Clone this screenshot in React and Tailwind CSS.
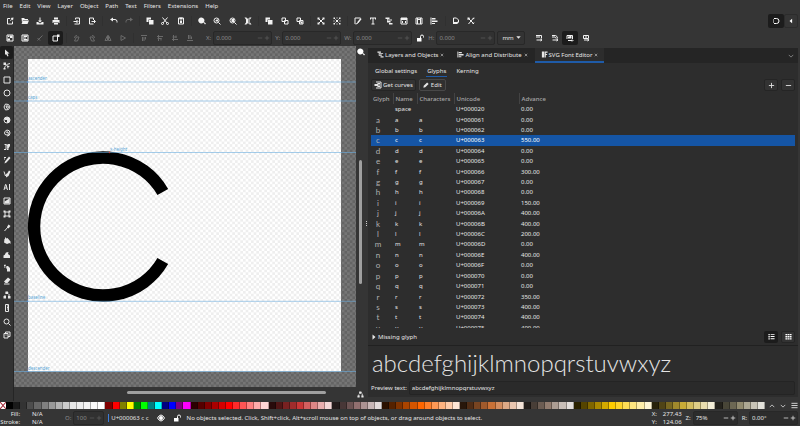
import { useState } from 'react';
import clsx from 'clsx';

// 16x16 icons: s = stroked path, f = filled path
const ICONS = {
  new: { s: 'M8 3H3v11h10V9', f: 'M9 2l6-1-1 6-2-2-3 3-1-1 3-3z' },
  open: { f: 'M1 2h5l2 2h6v2H4L2 11zM4 7h12l-3 7H1z' },
  save: { f: 'M7 1h2v6h3l-4 4-4-4h3zM1 10h3l4 3 4-3h3v5H1z' },
  print: { f: 'M4 1h8v4H4zM1 6h14v6h-2v-2H3v2H1zM4 11h8v4H4z' },
  import: { s: 'M5 5V2h8v12H3M1 9h8M7 6l3 3-3 3' },
  export: { s: 'M11 6V2H3v12h8M7 9h7M12 6l3 3-3 3' },
  undo: { s: 'M2 5h8q4 0 4 4v2', f: 'M6 1v8L0 5z' },
  redo: { s: 'M14 5H6q-4 0-4 4v2', f: 'M10 1v8l6-4z' },
  copy: { f: 'M1 1h9v4H5v5H1zM6 6h9v9H6z' },
  cut: { s: 'M3 1l9 11M13 1L4 12M1 13a2 2 0 104 0 2 2 0 10-4 0M11 13a2 2 0 104 0 2 2 0 10-4 0' },
  paste: { s: 'M3 2h10v12H3z', f: 'M5 1h6v4H5zM6 7h4v5H6z' },
  zoomSel: { f: 'M7 1a6 6 0 104 10l3 4 2-2-4-3A6 6 0 007 1z' },
  zoomDraw: { s: 'M7 2a5 5 0 100 10A5 5 0 007 2zM11 11l4 4', f: 'M7 5h3v4H5V7z' },
  zoomPage: { s: 'M7 2a5 5 0 100 10A5 5 0 007 2zM11 11l4 4', f: 'M5 4h5v6H5z' },
  zoomWidth: { f: 'M5 3h6v10H5zM1 1h4l2 4v6l-2 4H1l3-4V5zM15 1h-4L9 5v6l2 4h4l-3-4V5z' },
  clone: { s: 'M2 2h7v7H2zM7 7h7v7H7z' },
  unclone: { s: 'M2 2h7v7H2zM7 7h7v7H7z', f: 'M9 9h4v4H9z' },
  dup: { f: 'M1 1h9v4H5v5H1zM6 6h9v9H6z' },
  group: { s: 'M4 4l8 8M12 4l-8 8', f: 'M1 1h4v4H1zM11 1h4v4h-4zM1 11h4v4H1zM11 11h4v4h-4zM6 6h4v4H6z' },
  ungroup: { s: 'M5 5l6 6M11 5l-6 6', f: 'M1 1h3v3H1zM12 1h3v3h-3zM1 12h3v3H1zM12 12h3v3h-3zM7 1h2v2H7zM7 13h2v2H7zM1 7h2v2H1zM13 7h2v2h-2z' },
  fill: { s: 'M2 14V2h11M3 14l4-1 7-9', f: 'M13 2l2 2-7 8-2-1z' },
  text: { f: 'M2 1h12v4h-2V3H9v10h2v2H5v-2h2V3H4v2H2z' },
  layers: { f: 'M1 1h8v3H1zM5 5h9v2H5zM4 8h7v3H4zM8 12h7v3H8zM4 4h1v6H4z' },
  xml: { s: 'M2 2h12v12H2zM2 5h12M6 8l-2 2 2 2M10 8l2 2-2 2', f: 'M2 2h12v3H2z' },
  selectors: { s: 'M2 2h12v12H2zM5 2v12M11 2v12M5 5h6' },
  curves: { s: 'M4 2h10v12H4M8 5h4M8 8h4M8 11h4', f: 'M1 6h5V3l3 5-3 5v-3H1z' },
  align: { f: 'M1 1h2v14H1zM4 2h7v3H4zM4 7h11v3H4zM4 12h6v2H4z' },
  docProps: { s: 'M3 14V2h6l4 4v4', f: 'M4 10h6v4H4zM10 9l4 2-4 3z' },
  prefs: { s: 'M2 2l12 12M13 2L3 14M2 5l3-3M11 14l3-3', f: 'M11 2l3 3 1-4zM1 1h4v4H1z' },
  selAll: { s: 'M2 2h12v12H2z', f: 'M3 9h5v4H3zM8 3h5v5H8zM4 3h3v3H4z' },
  selLayer: { s: 'M2 2h12v12H2z', f: 'M5 3h7v3H5zM4 7h6v2H4zM5 10h8v3H5z' },
  desel: { s: 'M3 13L13 3M3 8l5 5' },
  touch: { s: 'M2 4h9v10H2z', f: 'M10 1h5v5h-5z' },
  rotL: { s: 'M3 14h6l3-8H7zM3 8q0-5 5-5' },
  rotR: { s: 'M13 14H7L4 6h5zM13 8q0-5-5-5' },
  flipH: { s: 'M7 3v10H2zM9 3v10h5z' },
  flipV: { s: 'M4 3v10l9-5z' },
  toTop: { s: 'M2 3h12M5 6v8M11 6v5M8 6v8' },
  up: { s: 'M2 5h12M5 2v12M10 8v5M3 9h8' },
  down: { s: 'M2 11h12M5 2v12M10 3v5M3 6h8' },
  toBottom: { s: 'M2 13h12M5 2v8M11 5v5M8 2v8' },
  lock: { s: 'M9 8V5q0-3 3-3t3 3v2', f: 'M2 8h9v7H2z' },
  scale1: { s: 'M2 3h11v6M2 6h8M3 12h10M11 10l3 2-3 2' },
  scale2: { s: 'M2 3h7q4 1 4 6M2 6h6q2 1 2 3M3 12h10M11 10l3 2-3 2' },
  scale3: { s: 'M2 10V3h11v7M5 7l6-3M4 13h9M12 11l2 2-2 2', f: 'M4 5h7v4H4z' },
  scale4: { s: 'M3 3h10v6H3zM4 12h9M6 6h4M11 10l3 2-3 2' },
  magnet: { s: 'M4 3h5a5 5 0 010 10H4M2 6h2M2 10h2' },
  tri: { f: 'M11 2v12L4 8z' },
  arrow: { f: 'M4 1l9 8H9l2 5-2 1-3-5-2 2z' },
  node: { s: 'M3 14Q3 5 14 3', f: 'M1 1h5v5H1zM7 6l7 3-3 1-1 4zM1 12h4v3H1z' },
  rect: { s: 'M2 2h12v12H2z' },
  ellipse: { s: 'M8 2a6 6 0 100 12A6 6 0 008 2z' },
  star: { s: 'M5 2l6 1 3 5-3 5-6 1-3-6zM6 6h4l1 3-3 2z' },
  box3d: { s: 'M8 2a6 6 0 100 12A6 6 0 008 2z', f: 'M8 2a6 6 0 010 12L8 8H3q0-5 5-6z' },
  spiral: { s: 'M8 8q2-2 3 1t-3 3q-5 0-5-4t5-6q6 0 6 6t-6 6M6 7q2-3 5 0' },
  pen: { s: 'M3 3h3v10H2M6 3l4 3', f: 'M9 2h5v4l-4 6-2-3zM8 11h3v3H8z' },
  pencil: { s: 'M2 3h4M2 6h2', f: 'M12 1l3 3-8 9-4 2 1-4z' },
  calli: { s: 'M2 3l3 9 3-5', f: 'M12 1l3 2-4 9-5 3v-4z' },
  textTool: { s: 'M2 14L5 3h1l3 11M3 10h5M13 2v12' },
  gradient: { s: 'M2 2h12v12H2z', f: 'M3 9l10-6v10H3z' },
  mesh: { s: 'M4 4h8v8H4z', f: 'M1 1h4v4H1zM11 1h4v4h-4zM1 11h4v4H1zM11 11h4v4h-4z' },
  dropper: { s: 'M3 14l7-8', f: 'M11 1l4 3-4 5-3-3z' },
  bucket: { s: 'M5 1v7', f: 'M3 4l6-2 6 7v5l-2-2-5 2-6-3z' },
  tweak: { f: 'M1 9q3-1 5-6l5-1-1 4 4 3v5H1z' },
  spray: { s: 'M2 3h3M2 6h3M4 1v3', f: 'M7 4h3l4 4v7H8V9H6z' },
  eraser: { s: 'M2 14h11', f: 'M10 1l5 4-6 7H5l-3-3z' },
  connector: { s: 'M5 4h6M4 12V8M12 12V6', f: 'M5 1h5v5H5zM1 10h5v5H1zM10 10h5v5h-5z' },
  measure: { s: 'M5 1h6v14H5zM8 4h2M8 7h2M8 10h2' },
  zoom: { s: 'M7 2a5 5 0 100 10A5 5 0 007 2zM11 11l4 4' },
  pages: { s: 'M2 5h8v9H2zM5 5V2h9v9h-4M5 8h2' },
  fontEd: { f: 'M2 1h5v14H2zM8 1h7v3h-4v3h3v2h-3v6H8z' },
  pencilSm: { f: 'M11 1l4 4-9 9-5 1 1-5z' },
  plus: { s: 'M8 2v12M2 8h12' },
  minus: { s: 'M2 8h12' },
  close: { s: 'M3 3l10 10M13 3L3 13' },
  chevD: { s: 'M2 5l6 6 6-6' },
  chevU: { s: 'M2 11l6-6 6 6' },
  list: { f: 'M1 2h3v3H1zM1 7h3v3H1zM1 12h3v3H1zM6 2h9v2H6zM6 7h9v2H6zM6 12h9v2H6z' },
  grid: { f: 'M1 2h4v3H1zM6 2h4v3H6zM11 2h4v3h-4zM1 7h4v3H1zM6 7h4v3H6zM11 7h4v3h-4zM1 12h4v3H1zM6 12h4v3H6zM11 12h4v3h-4z' },
  eye: { s: 'M1 8q7-12 14 0-7 12-14 0z', f: 'M8 4a4 4 0 100 8 4 4 0 000-8z' },
  menu: { s: 'M1 3h14M1 8h14M1 13h14' },
  caret: { f: 'M1 4h14l-7 8z' },
  play: { f: 'M4 1l8 7-8 7z' },
};

function Icon({ name, className = 'size-2' }) {
  const { s, f } = ICONS[name];
  return (
    <svg viewBox="0 0 16 16" className={clsx('shrink-0', className)} aria-hidden="true">
      {s && <path d={s} fill="none" stroke="currentColor" strokeWidth="2" />}
      {f && <path d={f} fill="currentColor" />}
    </svg>
  );
}

const MENUS = ['File', 'Edit', 'View', 'Layer', 'Object', 'Path', 'Text', 'Filters', 'Extensions', 'Help'];

const COMMANDS = [
  ['new', 'open', 'save', 'print'],
  ['import', 'export'],
  ['undo', 'redo'],
  ['copy', 'cut', 'paste'],
  ['zoomSel', 'zoomDraw', 'zoomPage', 'zoomWidth'],
  ['dup', 'clone', 'unclone'],
  ['group', 'ungroup'],
  ['fill', 'text', 'layers', 'xml', 'selectors', 'align'],
  ['docProps', 'prefs'],
];

const SELECT_TOOLS = [
  ['selAll', 'selLayer', 'desel', 'touch'],
  ['rotL', 'rotR', 'flipH', 'flipV'],
  ['toTop', 'up', 'down', 'toBottom'],
];

const TOOLS = [
  'arrow', 'node', 'rect', 'ellipse', 'star', 'box3d', 'spiral', 'pen', 'pencil', 'calli', 'textTool',
  'gradient', 'mesh', 'dropper', 'bucket', 'tweak', 'spray', 'eraser', 'connector', 'measure', 'zoom', 'pages',
];

const ADVANCE = { c: 550, f: 300, i: 150, j: 400, k: 400, l: 200, n: 400, r: 350, s: 400, t: 400, u: 400 };

const GLYPHS = ['space', ...'abcdefghijklmnopqrstu'].map((name) => {
  const char = name === 'space' ? ' ' : name;
  return {
    name,
    char,
    unicode: `U+${char.charCodeAt(0).toString(16).toUpperCase().padStart(6, '0')}`,
    advance: (ADVANCE[name] ?? 0).toFixed(2),
  };
});

const PALETTE = `
000000 1a1a1a 333333 4d4d4d 666666 808080 999999 b3b3b3 cccccc e6e6e6 ececec f2f2f2 f9f9f9 ffffff
800000 ff0000 808000 ffff00 008000 00ff00 008080 00ffff 000080 0000ff 800080 ff00ff
2b0000 550000 800000 aa0000 d40000 ff0000 ff2a2a ff5555 ff8080 ffaaaa ffd5d5
280b0b 501616 782121 a02c2c c83737 d35f5f de8787 e9afaf f4d7d7
241c1c 483737 6c5353 916f6f ac9393 c8b7b7 e3dbdb
2b1100 552200 803300 aa4400 d45500 ff6600 ff7f2a ff9955 ffb380 ffccaa ffe6d5
28170b 502d16 784421 a05a2c c87137 d38d5f deaa87 e9c6af f4e3d7
241f1c 483e37 6c5d53 917c6f ac9d93 c8beb7 e3dedb
2b2200 554400 806600 aa8800 d4aa00 ffcc00 ffd42a ffdd55 ffe680 ffeeaa fff6d5
28220b 504416 786721 a0892c c8ab37 d3bc5f decd87 e9ddaf f4eed7
24221c 484537 6c6753 918a6f aca793 c8c4b7 e3e2db`.trim().split(/\s+/);

const GUIDES = [
  { label: 'ascender', x: 28, y: 82 },
  { label: 'caps', x: 28, y: 101 },
  { label: 'x-height', x: 110, y: 152.5 },
  { label: 'baseline', x: 28, y: 301.3 },
  { label: 'descender', x: 28, y: 371.5 },
];

function IconGroups({ groups, dim = [], active }) {
  return groups.map((group, i) => (
    <div key={i} className="contents">
      {i > 0 && <div className="w-1.5 shrink-0 flex justify-center"><div className="w-px h-2.5 bg-[#303030]" /></div>}
      {group.map((name) => (
        <button
          key={name}
          aria-label={name}
          className={clsx(
            'flex-1 h-3.5 flex items-center justify-center rounded-xs',
            name === active && 'bg-[#1c1c1c]',
            dim.includes(name) ? 'text-[#6a6a6a]' : 'text-[#f2f2f2]'
          )}
        >
          <Icon name={name} />
        </button>
      ))}
    </div>
  ));
}

function Spin({ id, label, value, className, dim }) {
  return (
    <div className="flex items-center gap-0.5">
      <label htmlFor={id} className={dim ? 'text-[#8a8a8a]' : ''}>{label}</label>
      <div className={clsx('flex items-center gap-px h-3.5 pl-0.5 pr-px rounded-xs border border-[#282828]', dim ? 'text-[#8a8a8a] bg-[#313131]' : 'bg-[#2c2c2c]', className)}>
        <input id={id} defaultValue={value} className="flex-1 w-0 min-w-0 bg-transparent outline-none" />
        <button aria-label={`${label} decrease`} className={dim ? 'text-[#5c5c5c]' : ''}><Icon name="minus" className="size-1.5" /></button>
        <button aria-label={`${label} increase`} className={dim ? 'text-[#5c5c5c]' : ''}><Icon name="plus" className="size-1.5" /></button>
      </div>
    </div>
  );
}

function Toolbars() {
  const dim = [...SELECT_TOOLS[1], ...SELECT_TOOLS[2], 'desel', 'redo'];
  return (
    <header className="shrink-0">
      <nav className="h-3 flex items-center gap-[7px] pl-[3px]">
        {MENUS.map((m) => <button key={m}>{m}</button>)}
      </nav>
      <div className="h-[17px] flex items-center justify-between pr-0.5">
        <div className="w-3/5 flex items-center pl-0.5">
          <IconGroups groups={COMMANDS} dim={dim} />
        </div>
        <div className="flex">
          <button aria-label="Snap" className="w-4 h-3.5 flex items-center justify-center rounded-xs bg-[#1c1c1c] text-white"><Icon name="magnet" /></button>
          <button aria-label="Snap options" className="w-3.5 h-3.5 flex items-center justify-center rounded-xs border border-[#2c2c2c] text-white"><Icon name="tri" className="size-1.5" /></button>
        </div>
      </div>
      <div className="h-[17px] flex items-center gap-0.5">
        <div className="w-[198px] flex items-center pl-0.5">
          <IconGroups groups={SELECT_TOOLS} dim={dim} active="touch" />
        </div>
        <div className="flex items-center gap-[3px] pl-1.5">
          <Spin id="x" label="X:" value="0.000" className="w-[59px]" dim />
          <Spin id="y" label="Y:" value="0.000" className="w-[59px]" dim />
          <Spin id="w" label="W:" value="0.000" className="w-[59px]" dim />
        </div>
        <button aria-label="Lock ratio" className="w-3 flex justify-center text-white"><Icon name="lock" /></button>
        <Spin id="h" label="H:" value="0.000" className="w-[59px]" dim />
        <div className="relative flex items-center">
          <select aria-label="Unit" className="appearance-none w-7 h-3.5 pl-1 rounded-xs border border-[#282828] bg-[#333]"><option>mm</option></select>
          <Icon name="caret" className="size-[5px] absolute right-1 pointer-events-none" />
        </div>
        <div className="w-[62px] ml-1 flex items-center">
          <IconGroups groups={[['scale1', 'scale2', 'scale3', 'scale4']]} active="scale3" />
        </div>
      </div>
    </header>
  );
}

function Canvas() {
  return (
    <div className="flex-1 min-w-0 flex flex-col">
      <div className="flex-1 min-h-0 flex">
        <svg viewBox="14 46 342 341" preserveAspectRatio="xMinYMin slice" className="flex-1 min-w-0 h-full" fontFamily="Noto Sans, sans-serif">
          <defs>
            <pattern id="desk" width="5.34" height="5.34" patternUnits="userSpaceOnUse">
              <path d="M0 0h5.34v5.34H0z" fill="#646464" />
              <path d="M0 0h2.67v2.67H0zM2.67 2.67h2.67v2.67H2.67z" fill="#767676" />
            </pattern>
            <pattern id="paper" width="5.34" height="5.34" patternUnits="userSpaceOnUse">
              <path d="M0 0h5.34v5.34H0z" fill="#fff" />
              <path d="M0 0h2.67v2.67H0zM2.67 2.67h2.67v2.67H2.67z" fill="#eee" />
            </pattern>
          </defs>
          <rect x="14" y="46" width="800" height="800" fill="url(#desk)" />
          <rect x="28" y="59" width="313" height="312.5" fill="url(#paper)" />
          <path d="M162.8 192A69 69 0 1 0 162.8 261" fill="none" stroke="#000" strokeWidth="12.4" />
          {GUIDES.map((g) => (
            <g key={g.label}>
              <path d={`M14 ${g.y}H356`} stroke="#6aaee0" strokeWidth="0.7" opacity="0.85" />
              <circle cx={g.x - 0.5} cy={g.y} r="0.8" fill={g.x > 28 ? '#c44' : '#5a8fd0'} />
              <text x={g.x} y={g.y - 2} fontSize="4.4" fill="#5aa7d8">{g.label}</text>
            </g>
          ))}
        </svg>
        <div className="w-[9px] flex flex-col items-center pt-0.5 text-white">
          <Icon name="zoomSel" />
          <div className="w-[3px] h-[124px] mt-[104px] rounded-full bg-[#a0a0a0]" />
        </div>
      </div>
      <div className="h-3.5 flex items-center justify-between">
        <div className="w-[199px] h-[3px] ml-[113px] mb-1 rounded-full bg-[#a0a0a0]" />
        <Icon name="connector" className="size-[7px] mr-px" />
      </div>
    </div>
  );
}

function GlyphTable() {
  const [selected, setSelected] = useState('c');
  return (
    <div className="h-[235px] overflow-hidden">
      <table className="w-full h-[240px] table-fixed border-collapse text-left">
        <colgroup>
          <col className="w-[22px]" />
          <col className="w-6" />
          <col className="w-[37px]" />
          <col className="w-[65px]" />
          <col />
        </colgroup>
        <thead>
          <tr className="text-[#a8a8a8]">
            {['Glyph', 'Name', 'Characters', 'Unicode', 'Advance'].map((h, i) => (
              <th key={h} className={clsx('h-[11px] p-0 pl-0.5 font-medium whitespace-nowrap', i > 0 && 'border-l border-[#434343]')}>{h}</th>
            ))}
          </tr>
        </thead>
        <tbody>
          {GLYPHS.map((g) => (
            <tr key={g.name} onClick={() => setSelected(g.name)} className={clsx(g.name === selected && 'bg-[#1555a5] text-white')}>
              <td className="p-0 pr-2 text-center font-[Lato] text-[8px] leading-[8px] text-[#b0b0b0]">{g.char}</td>
              <td className="p-0 pl-0.5">{g.name}</td>
              <td className="p-0 pl-0.5">{g.char}</td>
              <td className="p-0 pl-0.5">{g.unicode}</td>
              <td className="p-0 pl-0.5">{g.advance}</td>
            </tr>
          ))}
        </tbody>
      </table>
    </div>
  );
}

function DockTab({ icon, label, active }) {
  return (
    <div className={clsx('h-full flex items-center gap-0.5 px-1.5 border-b-2', active ? 'border-[#1f5ba8] bg-[#2d2d2d]' : 'border-transparent')}>
      <button className="flex items-center gap-px whitespace-nowrap"><Icon name={icon} className="size-[7px]" />{label}</button>
      <button aria-label={`Close ${label}`}><Icon name="close" className="size-1" /></button>
    </div>
  );
}

function FontEditor() {
  const [preview, setPreview] = useState('abcdefghijklmnopqrstuvwxyz');
  return (
    <section className="w-[53.75%] mt-0.5 mb-1 mr-0.5 flex flex-col bg-[#2d2d2d]">
      <div className="h-[15px] flex items-center justify-between bg-[#252525] pl-[3px] pr-1">
        <div className="h-full flex gap-px">
          <DockTab icon="layers" label="Layers and Objects" />
          <DockTab icon="align" label="Align and Distribute" />
          <DockTab icon="fontEd" label="SVG Font Editor" active />
        </div>
        <button aria-label="Dock menu" className="text-[#999]"><Icon name="chevD" className="size-1.5" /></button>
      </div>
      <div className="flex gap-2 px-1.5 pt-[3px]">
        {['Global settings', 'Glyphs', 'Kerning'].map((t) => (
          <button key={t} className={clsx('h-[11px] px-px border-b', t === 'Glyphs' ? 'border-[#1f5ba8]' : 'border-transparent')}>{t}</button>
        ))}
      </div>
      <div className="flex items-center gap-[3px] pl-[3px] pr-[3px] mt-px mb-px h-3.5">
        <button className="flex items-center gap-px h-3 px-0.5 rounded-xs border border-[#252525] bg-[#333]"><Icon name="curves" />Get curves</button>
        <button className="flex items-center gap-0.5 h-3 px-[3px] rounded-xs border border-[#484848] bg-[#303030]"><Icon name="pencilSm" className="size-1.5" />Edit</button>
        <button aria-label="Add glyph" className="ml-auto w-3.5 h-3 flex items-center justify-center rounded-xs border border-[#252525] bg-[#333]"><Icon name="plus" className="size-[7px]" /></button>
        <button aria-label="Remove glyph" className="w-3.5 h-3 flex items-center justify-center rounded-xs border border-[#252525] bg-[#333]"><Icon name="minus" className="size-[7px]" /></button>
      </div>
      <div className="px-[3px]">
        <GlyphTable />
      </div>
      <div className="flex items-center gap-[3px] h-[17px] px-[3px]">
        <button className="flex items-center gap-px"><Icon name="play" className="size-1.5" />Missing glyph</button>
        <button aria-label="List view" className="ml-auto w-3.5 h-3 flex items-center justify-center rounded-xs bg-[#1c1c1c] text-white"><Icon name="list" className="size-[7px]" /></button>
        <button aria-label="Grid view" className="w-3.5 h-3 flex items-center justify-center rounded-xs border border-[#252525] bg-[#333] text-white"><Icon name="grid" className="size-[7px]" /></button>
      </div>
      <div className="flex-1 flex items-center border-t border-[#212121] pl-1 overflow-hidden font-[Lato] font-light text-[24px] leading-8 text-[#e4e4e4]">
        {preview}
      </div>
      <div className="flex items-center gap-0.5 h-[18px] px-[3px]">
        <label htmlFor="preview">Preview text:</label>
        <input
          id="preview"
          value={preview}
          onChange={(e) => setPreview(e.target.value)}
          className="flex-1 min-w-0 h-3.5 px-0.5 rounded-xs border border-[#242424] bg-[#2a2a2a] outline-none"
        />
      </div>
    </section>
  );
}

function Palette() {
  return (
    <div className="h-[9px] shrink-0 flex items-center">
      <div className="flex-1 flex h-[7px]">
        <button aria-label="No color" className="flex-1 bg-white">
          <svg viewBox="0 0 8 8" preserveAspectRatio="none" className="size-full"><path d="M0 0l8 8M8 0L0 8" stroke="#a02030" strokeWidth="1.2" /></svg>
        </button>
        {PALETTE.map((c, i) => (
          <button key={i} aria-label={`#${c}`} className="flex-1 border-r border-black/30" style={{ backgroundColor: `#${c}` }} />
        ))}
      </div>
      <div className="w-[35px] flex items-center justify-between pl-1 pr-0.5">
        <button aria-label="Scroll up"><Icon name="chevU" className="size-1.5" /></button>
        <button aria-label="Scroll down"><Icon name="chevD" className="size-1.5" /></button>
        <button aria-label="Palette menu"><Icon name="menu" className="size-[7px]" /></button>
      </div>
    </div>
  );
}

function StatusBar() {
  return (
    <footer className="h-4 shrink-0 flex items-center pr-0.5">
      <dl className="w-[65px] grid grid-cols-[20px_1fr] gap-x-3">
        <dt className="text-right">Fill:</dt><dd>N/A</dd>
        <dt className="text-right">Stroke:</dt><dd>N/A</dd>
      </dl>
      <Spin id="opacity" label="O:" value="100" className="w-[31px]" dim />
      <button className="ml-1 pl-0.5 mr-2 border-l border-[#3b7ddd] whitespace-nowrap">U+000063 c c</button>
      <button aria-label="Toggle visibility" className="mr-2 text-white"><Icon name="eye" /></button>
      <button aria-label="Toggle lock" className="mr-1.5 text-white"><Icon name="lock" /></button>
      <p className="flex-1 whitespace-nowrap">No objects selected. Click, Shift+click, Alt+scroll mouse on top of objects, or drag around objects to select.</p>
      <dl className="grid grid-cols-[11px_auto] mr-1">
        <dt>X:</dt><dd>277.43</dd>
        <dt>Y:</dt><dd>124.06</dd>
      </dl>
      <div className="flex gap-1">
        <Spin id="zoom" label="Z:" value="75%" className="w-[45px]" />
        <Spin id="rotation" label="R:" value="0.00°" className="w-[49px]" />
      </div>
    </footer>
  );
}

export default function App() {
  return (
    <div className="h-screen flex flex-col overflow-hidden bg-[#353535] text-[#e6e6e6] text-[6px] leading-[8px] font-['Noto_Sans',sans-serif]">
      <Toolbars />
      <main className="flex-1 min-h-0 flex">
        <aside className="w-3.5 border-r border-[#252525] bg-[#333]">
          <div className="h-[296px] flex flex-col">
            {TOOLS.map((t) => (
              <button key={t} aria-label={t} className={clsx('flex-1 min-h-0 flex items-center justify-center', t === 'arrow' && 'bg-[#1c1c1c] rounded-xs')}>
                <Icon name={t} />
              </button>
            ))}
          </div>
        </aside>
        <Canvas />
        <div className="w-[3px] flex flex-col items-center justify-center gap-px">
          <i className="size-px bg-[#ccc]" />
          <i className="size-px bg-[#ccc]" />
          <i className="size-px bg-[#ccc]" />
        </div>
        <FontEditor />
      </main>
      <Palette />
      <StatusBar />
    </div>
  );
}
